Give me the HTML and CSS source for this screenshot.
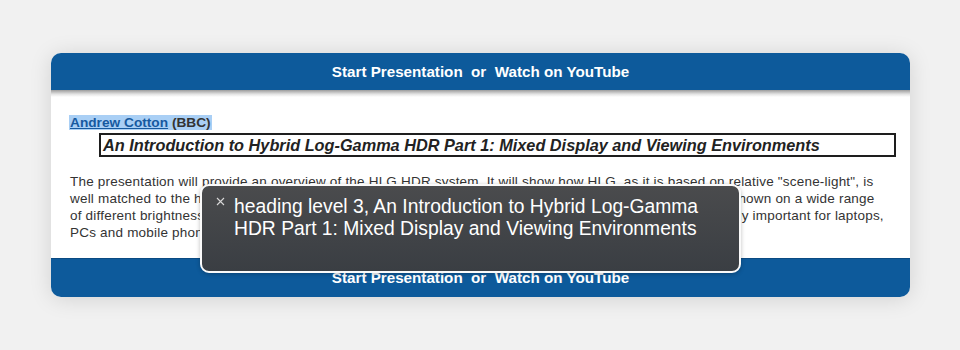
FILE: index.html
```html
<!DOCTYPE html>
<html lang="en">
<head>
<meta charset="utf-8">
<title>Presentation</title>
<link rel="stylesheet" href="styles.css">
</head>
<body>
<div class="card">
  <div class="bar bar-top">Start Presentation&nbsp; or&nbsp; Watch on YouTube</div>
  <div class="bar-shade"></div>
  <div class="content">
    <div class="author"><span class="sel"><a href="#" class="link">Andrew Cotton</a> (BBC)</span></div>
    <h3 class="title">An Introduction to Hybrid Log-Gamma HDR Part 1: Mixed Display and Viewing Environments</h3>
    <p class="desc">The presentation will provide an overview of the HLG HDR system. It will show how HLG, as it is based on relative "scene-light", is<br>well matched to the human visual system's adaptation, and therefore reproduces consistent pictures, when shown on a wide range<br>of different brightness displays and in very different viewing environments in the home. This is also particularly important for laptops,<br>PCs and mobile phones which are often viewed in bright environments.</p>
  </div>
  <div class="bar bar-bottom">Start Presentation&nbsp; or&nbsp; Watch on YouTube</div>
</div>
<div class="caption">
  <svg class="close" width="9" height="9" viewBox="0 0 9 9"><path d="M1 1L8 8M8 1L1 8" stroke="#d8d8d8" stroke-width="1.1" fill="none"/></svg>
  <div class="caption-text">heading level 3, An Introduction to Hybrid Log-Gamma HDR Part 1: Mixed Display and Viewing Environments</div>
</div>
</body>
</html>
```
FILE: styles.css
```css
html, body {
  margin: 0;
  padding: 0;
}
body {
  background: #f1f1f1;
  width: 960px;
  height: 350px;
  overflow: hidden;
  position: relative;
  font-family: "Liberation Sans", Arial, sans-serif;
}
.card {
  margin: 53px 0 0 51px;
  width: 859px;
  height: 244px;
  border-radius: 10px;
  overflow: hidden;
  background: #fff;
  box-shadow: 0 2px 22px rgba(0, 0, 0, 0.13);
  display: flex;
  flex-direction: column;
}
.bar {
  background: #0d5a9b;
  color: #fff;
  font-weight: bold;
  font-size: 15.2px;
  text-align: center;
}
.bar-top {
  height: 37px;
  line-height: 37px;
}
.bar-shade {
  height: 7px;
  background: linear-gradient(#9c9c9c, #e4e4e4 60%, #fff);
}
.content {
  flex: 1;
  padding: 17px 14px 0 19px;
}
.author {
  font-size: 13.7px;
  font-weight: bold;
  line-height: 17px;
  color: #333;
}
.sel {
  background: #a9cff5;
  padding: 0 1px 0 0;
  margin-left: -1px;
  padding-left: 1px;
}
.link {
  color: #16599f;
  text-decoration: underline;
}
.title {
  margin: 2px 0 0 29px;
  width: 791px;
  height: 20px;
  border: 2px solid #1e1e1e;
  padding: 0 0 0 2px;
  box-sizing: content-box;
  font-size: 16.3px;
  font-style: italic;
  font-weight: bold;
  line-height: 20px;
  color: #222;
  white-space: nowrap;
}
.desc {
  margin: 16px 0 0 0;
  font-size: 13.5px;
  letter-spacing: 0.2px;
  line-height: 17px;
  color: #333;
  white-space: nowrap;
}
.bar-bottom {
  height: 38px;
  line-height: 38px;
  border-top: 1px solid #0a4a82;
}
.caption {
  position: absolute;
  left: 200px;
  top: 184px;
  width: 537px;
  height: 85px;
  border: 2px solid #fafafa;
  border-radius: 9px;
  background: linear-gradient(#4a4b4d, #3a3e43);
  box-shadow: 0 1px 4px rgba(0, 0, 0, 0.25);
  display: flex;
  align-items: flex-start;
  padding: 0;
}
.close {
  margin: 11px 0 0 14px;
  flex: none;
}
.caption-text {
  margin: 10px 0 0 9px;
  width: 480px;
  color: #fff;
  font-size: 19.3px;
  line-height: 22px;
}
```
